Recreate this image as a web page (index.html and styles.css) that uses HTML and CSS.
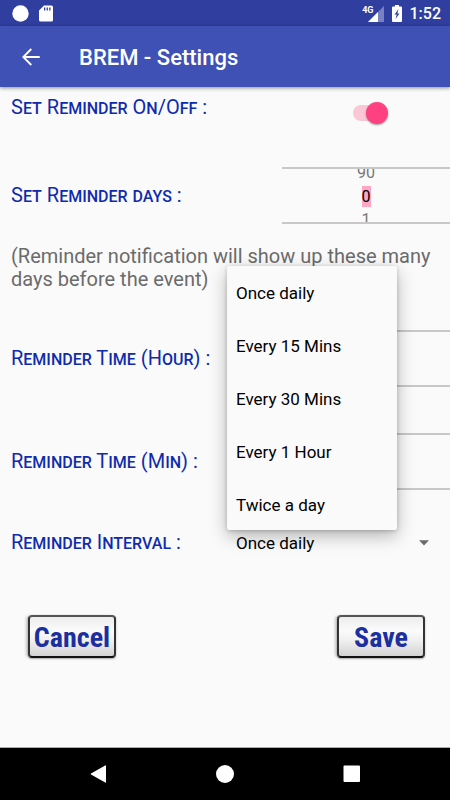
FILE: index.html
```html
<!DOCTYPE html>
<html lang="en">
<head>
<meta charset="utf-8">
<meta name="viewport" content="width=device-width, initial-scale=1">
<title>BREM - Settings</title>
<link rel="stylesheet" href="styles.css">
</head>
<body>
<div class="status">
  <div class="status-side status-left">
    <svg width="17" height="17" viewBox="0 0 17 17"><circle cx="8.500" cy="8.500" r="8.200" fill="#fff"/></svg>
    <svg width="14" height="17" viewBox="0 0 14 17"><path fill="#fff" fill-rule="evenodd" d="M5 .5h7.500Q14 .5 14 2v13q0 1.500-1.500 1.500h-11Q0 16.500 0 15V5.500zM5 2.500v3h1.300v-3zm2.600 0v3h1.300v-3zm2.600 0v3h1.300v-3z"/></svg>
  </div>
  <div class="status-side">
    <div class="signal">
      <span class="network">4G</span>
      <svg width="16" height="16" viewBox="0 0 16 16"><path d="M16 0v16H0z" fill="#fff" opacity=".35"/><path d="M10 6v10H0z" fill="#fff"/></svg>
    </div>
    <svg width="10" height="17" viewBox="0 0 10 17"><path fill="#fff" fill-rule="evenodd" d="M3 0h4v1.500h2q1 0 1 1V16q0 1-1 1H1q-1 0-1-1V2.500q0-1 1-1h2zM6.500 4 2.500 9.500h2.200L3.500 14l4-5.500H5.300z"/></svg>
    <span class="clock">1:52</span>
  </div>
</div>
<header class="appbar">
  <button class="back" type="button" aria-label="Back">
    <svg width="18" height="18" viewBox="0 0 18 18" fill="none" stroke="#fff" stroke-width="1.800"><path d="M17.700 9H1.500M9.300 1 1.300 9l8 8"/></svg>
  </button>
  <h1>BREM - Settings</h1>
</header>
<main>
  <form class="settings">
    <div class="row row-switch">
      <label class="name" for="onoff">S<span class="sc">et</span> R<span class="sc">eminder</span> O<span class="sc">n</span>/O<span class="sc">ff</span> :</label>
      <input class="switch" id="onoff" type="checkbox" role="switch" checked>
    </div>
    <div class="row row-days">
      <label class="name" for="days">S<span class="sc">et</span> R<span class="sc">eminder</span> <span class="sc">days</span> :</label>
      <div class="picker">
        <span class="near">90</span>
        <input class="value" id="days" type="text" value="0">
        <span class="near">1</span>
      </div>
    </div>
    <p class="note">(Reminder notification will show up these many days before the event)</p>
    <div class="row row-time">
      <label class="name" for="hour">R<span class="sc">eminder</span> T<span class="sc">ime</span> (H<span class="sc">our</span>) :</label>
      <div class="picker"><input class="value blank" id="hour" type="text"></div>
    </div>
    <div class="row row-time">
      <label class="name" for="min">R<span class="sc">eminder</span> T<span class="sc">ime</span> (M<span class="sc">in</span>) :</label>
      <div class="picker"><input class="value blank" id="min" type="text"></div>
    </div>
    <div class="row row-interval">
      <label class="name" for="interval">R<span class="sc">eminder</span> I<span class="sc">nterval</span> :</label>
      <div class="spinner">
        <select id="interval">
          <option>Once daily</option>
          <option>Every 15 Mins</option>
          <option>Every 30 Mins</option>
          <option>Every 1 Hour</option>
          <option>Twice a day</option>
        </select>
        <svg class="arrow" width="10" height="6" viewBox="0 0 10 6"><path d="M0 .3h10L5 5.500z" fill="#6b6b6b"/></svg>
        <div class="menu">
          <button type="button">Once daily</button>
          <button type="button">Every 15 Mins</button>
          <button type="button">Every 30 Mins</button>
          <button type="button">Every 1 Hour</button>
          <button type="button">Twice a day</button>
        </div>
      </div>
    </div>
    <div class="actions">
      <button class="action" type="button">Cancel</button>
      <button class="action" type="button">Save</button>
    </div>
  </form>
</main>
<nav class="navbar">
  <button type="button" aria-label="Back"><svg width="18" height="18" viewBox="0 0 18 18"><path d="M17 .8v16.400q0 .8-.8.3L2 9.500q-.7-.5 0-1L16.200.5q.8-.4.8.3z" fill="#fff"/></svg></button>
  <button type="button" aria-label="Home"><svg width="18" height="18" viewBox="0 0 18 18"><circle cx="9" cy="9" r="9" fill="#fff"/></svg></button>
  <button type="button" aria-label="Recent apps"><svg width="18" height="18" viewBox="0 0 18 18"><rect x=".5" y=".5" width="16.500" height="16.500" rx="1" fill="#fff"/></svg></button>
</nav>
</body>
</html>
```
FILE: styles.css
```css
* { box-sizing: border-box; }

body {
  margin: 0;
  min-height: 100vh;
  display: flex;
  flex-direction: column;
  background: #fafafa;
  font-family: Roboto, sans-serif;
  font-size: 17px;
  color: #000;
}

button, input, select {
  font: inherit;
  color: inherit;
  margin: 0;
  padding: 0;
  border: 0;
  background: none;
}

svg { display: block; flex: none; }

.status {
  height: 26px;
  padding: 1px 9px 0 12px;
  display: flex;
  justify-content: space-between;
  align-items: center;
  background: #303f9f;
  color: #fff;
}

.status-side { display: flex; align-items: center; gap: 8px; }
.status-left { gap: 10px; }

.signal { display: flex; align-items: flex-start; }

.network {
  font-size: 9px;
  font-weight: 700;
  line-height: 8px;
  margin-right: -6px;
}

.clock { font-size: 16px; font-weight: 500; line-height: 20px; }

.appbar {
  height: 61px;
  padding: 0 22px;
  display: flex;
  align-items: center;
  gap: 39px;
  background: #3f51b5;
  color: #fff;
  box-shadow: 0 1px 4px rgba(0, 0, 0, .45);
}

h1 { margin: 0; font-size: 22px; font-weight: 500; line-height: 30px; padding-top: 2px; }

main { flex: 1; }

.row { display: flex; align-items: center; padding-left: 11px; }

.name {
  flex: 1;
  font-size: 20px;
  font-weight: 400;
  line-height: 24px;
  text-transform: uppercase;
  color: #0f2bad;
}

.sc { font-size: 16px; font-weight: 500; }

.row-switch { height: 52px; padding-right: 67px; }
.row-switch .name { align-self: flex-start; margin-top: 8px; }

.switch {
  appearance: none;
  width: 30px;
  height: 16px;
  display: flex;
  align-items: center;
  justify-content: flex-end;
  background: #fbc6d6;
  border-radius: 8px;
}

.switch::before {
  content: "";
  flex: none;
  width: 22px;
  height: 22px;
  margin-right: -5px;
  border-radius: 50%;
  background: #ff4081;
  box-shadow: 0 1px 2px rgba(0, 0, 0, .4);
}

.picker {
  width: 168px;
  height: 57px;
  padding-top: 2px;
  border: solid #c8c8c8;
  border-width: 2px 0;
  display: flex;
  flex-direction: column;
  align-items: center;
  justify-content: center;
  gap: 2px;
  font-size: 16px;
  overflow: hidden;
}

.near { line-height: 22px; color: #777; }

.value {
  width: 9px;
  height: 21px;
  flex: none;
  text-align: center;
  background: #ffa6c3;
}

.blank { background: none; }

.row-days { margin-top: 28px; }

.note {
  margin: 0;
  padding: 21px 18px 0 11px;
  font-size: 20px;
  line-height: 23px;
  color: #6b6b6b;
}

.row-time { margin-top: 39px; }
.row-time + .row-time { margin-top: 46px; }

.row-interval { margin-top: 35px; }

.spinner { position: relative; width: 223px; height: 36px; }

.spinner select {
  appearance: none;
  width: 100%;
  height: 100%;
  padding-left: 9px;
}

.arrow { position: absolute; right: 21px; top: 15px; pointer-events: none; }

.menu {
  position: absolute;
  left: 0;
  bottom: 31px;
  width: 170px;
  display: flex;
  flex-direction: column;
  gap: 1px;
  background: #fafafa;
  border-radius: 2px;
  box-shadow: 0 6px 18px rgba(0, 0, 0, .28), 0 1px 4px rgba(0, 0, 0, .2);
}

.menu button { height: 52px; padding: 1px 0 0 9px; text-align: left; }

.actions {
  display: flex;
  justify-content: space-between;
  padding: 54px 25px 0 28px;
}

.action {
  width: 88px;
  height: 43px;
  padding-top: 2px;
  border: 2px solid #333;
  border-color: #555 #333 #111;
  border-radius: 4px;
  background: linear-gradient(#ececec, #fbfbfb 35%, #f0f0f0 60%, #d2d2d2);
  box-shadow: -3px 0 3px -1px rgba(0, 0, 0, .2), 0 1px 2px rgba(0, 0, 0, .3);
  font-family: "Roboto Condensed", "Liberation Sans Narrow", sans-serif;
  font-size: 28px;
  font-weight: 700;
  line-height: 36px;
  color: #1c2f9f;
}

.navbar {
  height: 53px;
  display: flex;
  justify-content: center;
  align-items: center;
  gap: 109px;
  background: #000;
  border-top: 1px solid #aaa;
}
```
